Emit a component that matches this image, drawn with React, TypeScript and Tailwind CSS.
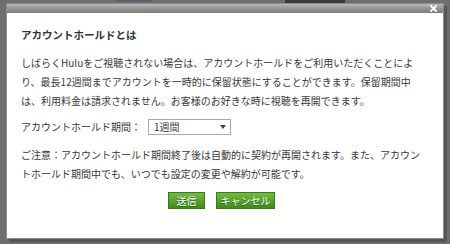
import React from "react";

const font = {
  fontFamily: '"Noto Sans CJK JP", "Noto Sans", sans-serif',
};

export default function App() {
  return (
    <div
      className="relative w-[450px] h-[244px] bg-[#6e6e6e] overflow-hidden pt-[4px] pl-[7px]"
      style={font}
    >
      {/* faint background content */}
      <div className="absolute left-[285px] top-0 w-[60px] h-[4px] bg-[#3a3a3a]" />
      <div className="absolute left-[116px] top-0 w-[36px] h-[2px] bg-[#5a6270]" />

      <div className="relative w-[436px] h-[234px] bg-white flex flex-col shadow-[0_0_0_1px_#8c8c8c,3px_3px_0_1px_#565656]">
        <div className="h-[9px] bg-gradient-to-b from-[#b8b8b8] via-[#959595] to-[#7c7c7c] flex justify-end items-center pr-[6px]">
          <svg width="7" height="7" viewBox="0 0 7 7">
            <path d="M1 1 L6 6 M6 1 L1 6" stroke="#ffffff" strokeWidth="1.8" strokeLinecap="square" />
          </svg>
        </div>
        <div className="flex flex-col pl-[14px] pt-[12px] text-[#383838] text-[10px]">
          <div className="font-bold leading-[19px] text-[10.5px] text-[#333]">アカウントホールドとは</div>
          <div className="mt-[9px] leading-[19px]">
            <div>しばらくHuluをご視聴されない場合は、アカウントホールドをご利用いただくことによ</div>
            <div>り、最長12週間までアカウントを一時的に保留状態にすることができます。保留期間中</div>
            <div>は、利用料金は請求されません。お客様のお好きな時に視聴を再開できます。</div>
          </div>
          <div className="mt-[9px] flex items-center h-[16px]">
            <span className="leading-[16px]">アカウントホールド期間：</span>
            <div className="ml-[7px] w-[83px] h-[16px] border border-[#a9a9a9] flex items-center justify-between pl-[5px] pr-[4px]">
              <span className="leading-[14px]">1週間</span>
              <svg width="6" height="4" viewBox="0 0 6 4">
                <path d="M0 0 L6 0 L3 4 Z" fill="#444" />
              </svg>
            </div>
          </div>
          <div className="mt-[10px] leading-[19px]">
            <div>ご注意：アカウントホールド期間終了後は自動的に契約が再開されます。また、アカウン</div>
            <div>トホールド期間中でも、いつでも設定の変更や解約が可能です。</div>
          </div>
        </div>
        <div className="mt-[9px] flex gap-[11px] pl-[161px]">
          <button className="w-[37px] h-[17px] bg-gradient-to-b from-[#74b843] to-[#3f8b1d] border border-[#3a7a1a] text-white text-[10px] leading-[15px] [text-shadow:0_1px_0_#2a5a10]">
            送信
          </button>
          <button className="w-[59px] h-[17px] bg-gradient-to-b from-[#74b843] to-[#3f8b1d] border border-[#3a7a1a] text-white text-[10px] leading-[15px] [text-shadow:0_1px_0_#2a5a10]">
            キャンセル
          </button>
        </div>
      </div>
    </div>
  );
}
